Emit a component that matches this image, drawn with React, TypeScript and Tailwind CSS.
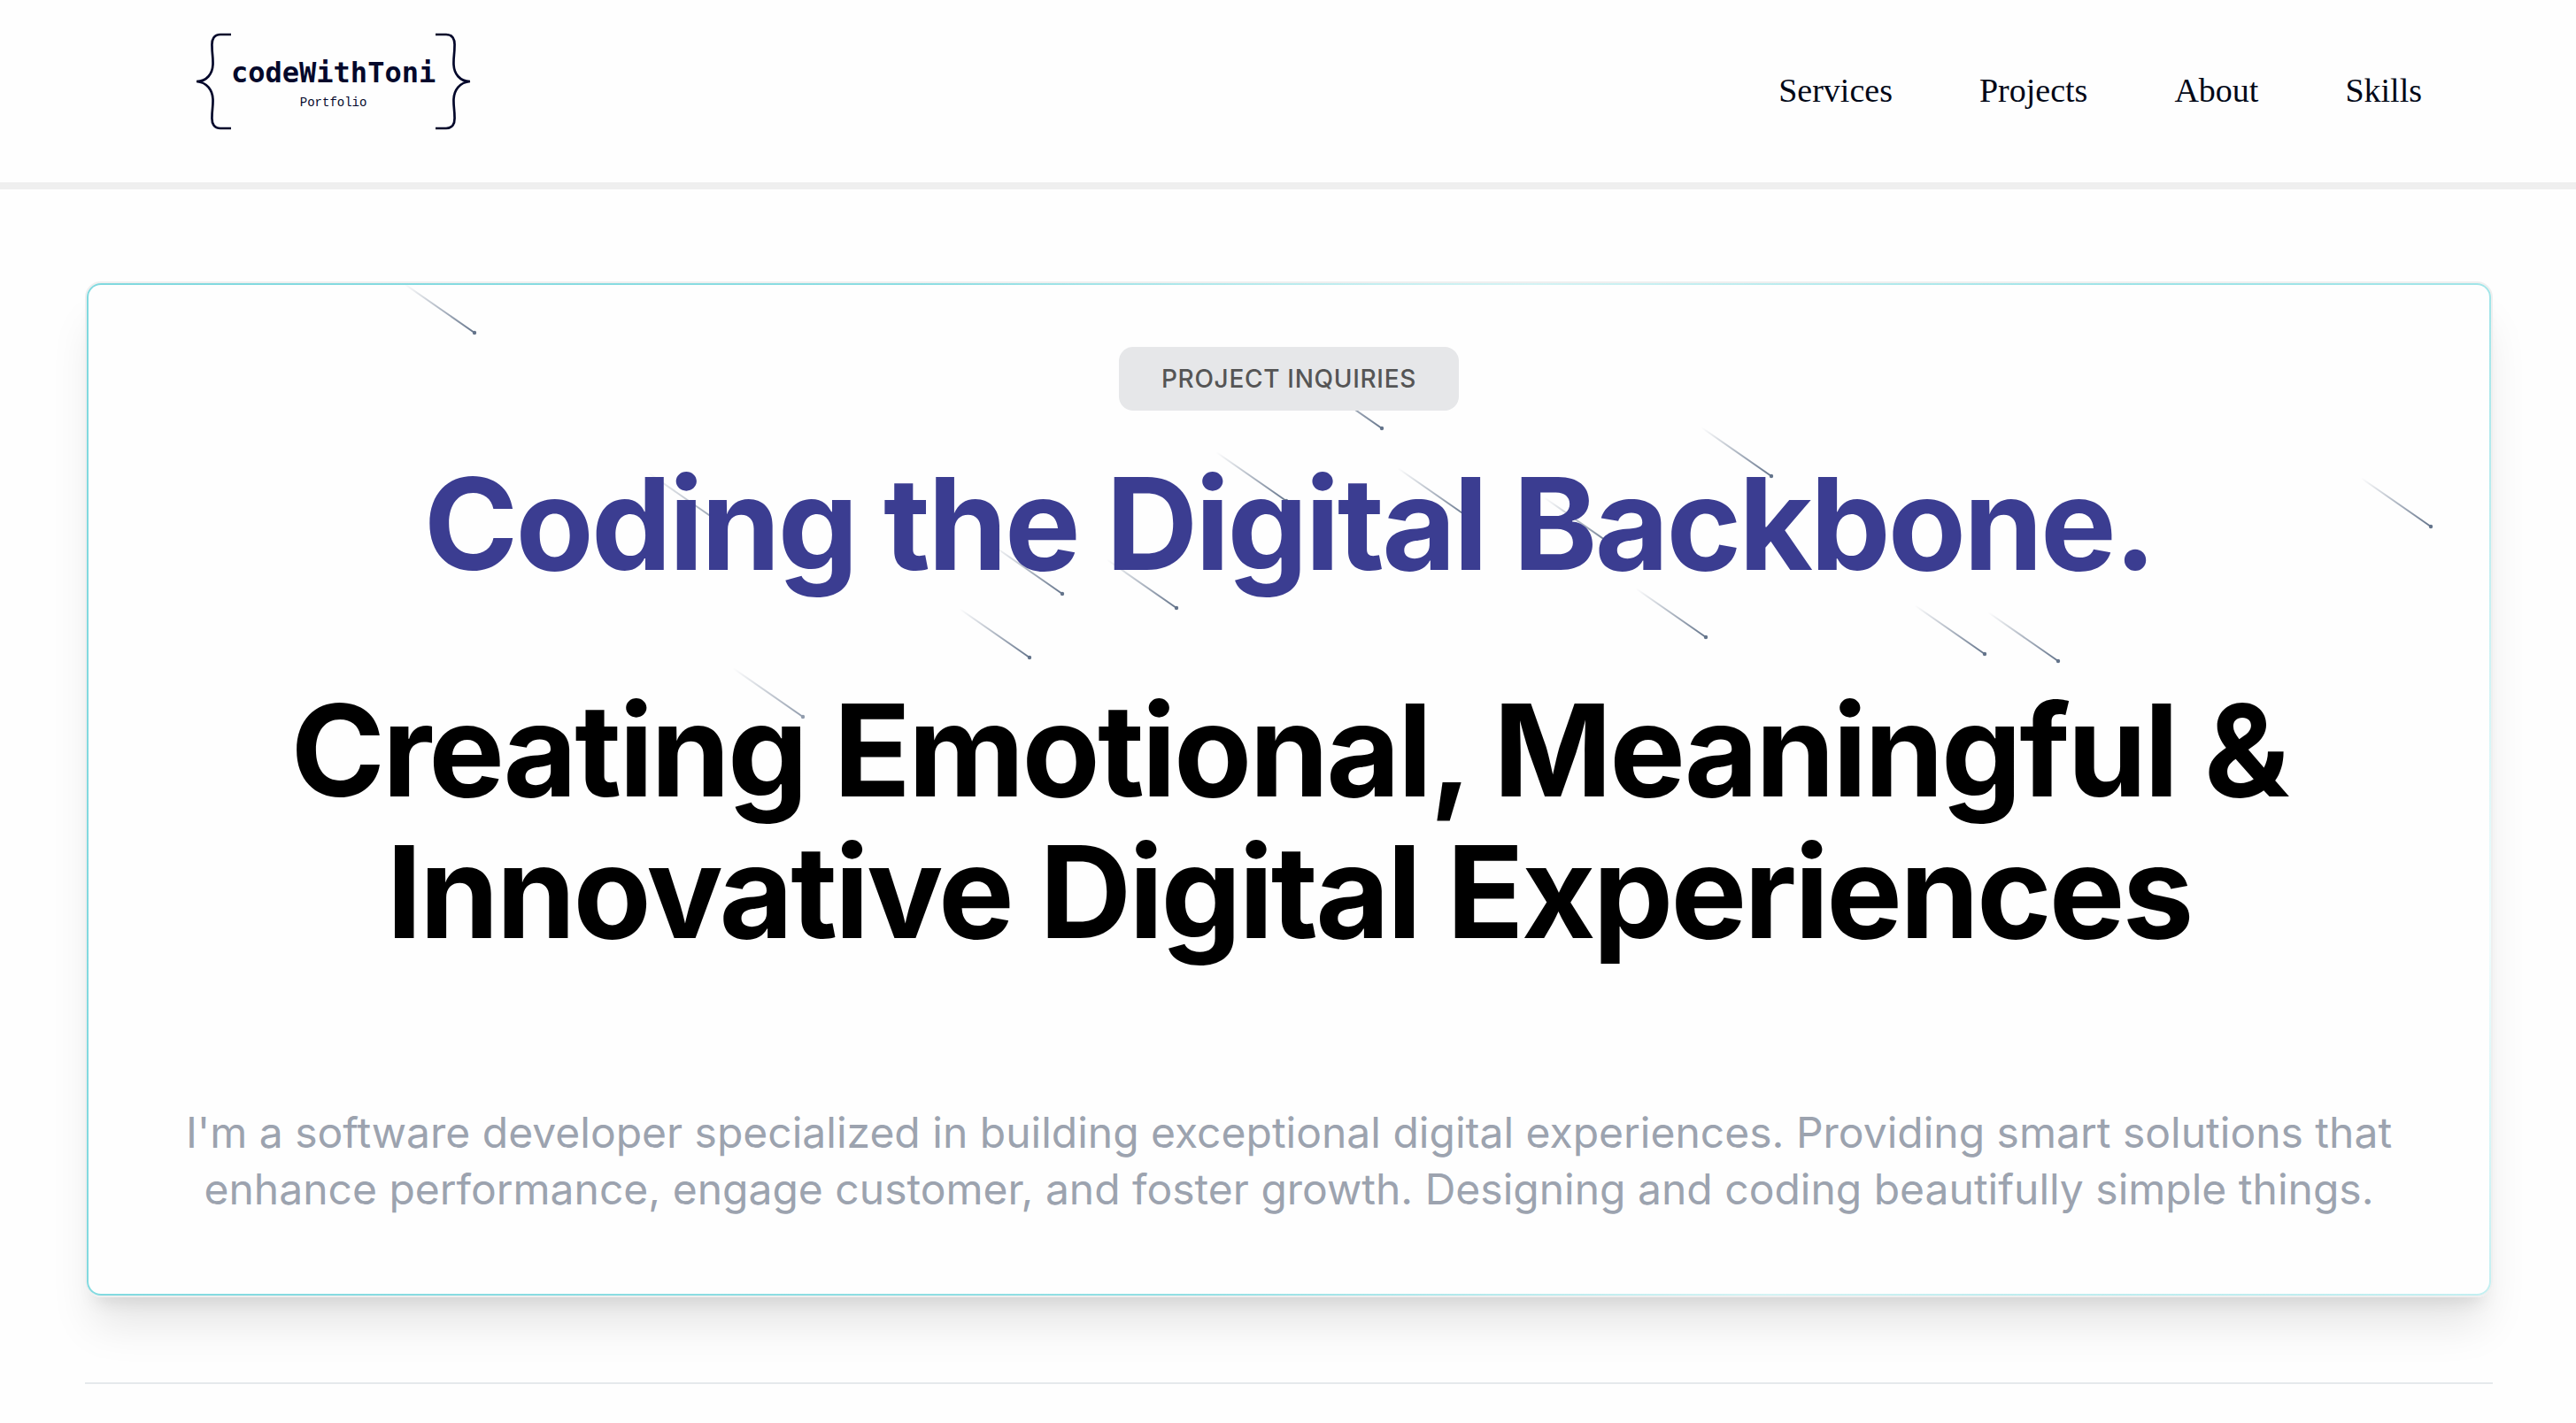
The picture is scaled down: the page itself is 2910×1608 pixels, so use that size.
const NAV_LINKS = ["Services", "Projects", "About", "Skills"];

type Meteor = { x: number; y: number; faint?: boolean };

const METEORS: Meteor[] = [
  { x: 436, y: 54 },
  { x: 1461, y: 162 },
  { x: 1353, y: 244 },
  { x: 1558, y: 262 },
  { x: 711, y: 267, faint: true },
  { x: 1100, y: 349 },
  { x: 1063, y: 421 },
  { x: 807, y: 488, faint: true },
  { x: 1229, y: 365 },
  { x: 1723, y: 295 },
  { x: 1827, y: 398 },
  { x: 1901, y: 216 },
  { x: 2142, y: 417 },
  { x: 2225, y: 425 },
  { x: 2646, y: 273 },
];

function Logo() {
  return (
    <a href="#home" aria-label="codeWithToni Portfolio" className="flex items-center text-[#04082b]">
      <Brace />
      <span className="flex flex-col items-center pt-3">
        <span className="font-['DejaVu_Sans_Mono',monospace] text-[32px] leading-9 font-bold">codeWithToni</span>
        <span className="font-['Liberation_Mono',monospace] text-[14px] leading-8">Portfolio</span>
      </span>
      <Brace flipped />
    </a>
  );
}

function Brace({ flipped = false }: { flipped?: boolean }) {
  return (
    <svg
      viewBox="0 0 40 110"
      className={flipped ? "h-[110px] w-10 -scale-x-100" : "h-[110px] w-10"}
      fill="none"
      stroke="currentColor"
      strokeWidth="2.7"
      aria-hidden="true"
    >
      <path d="M40 2H28C21 2 18 7 18.500 15C18.500 25 19.800 26 19.500 36C19 46 13 55 1 55C13 56 19 65 19.500 75C19.800 84 18.500 86 18.500 95C18 103 21 108 28 108H40" />
    </svg>
  );
}

function MeteorShower() {
  return (
    <svg
      viewBox="0 0 2712 1140"
      preserveAspectRatio="xMidYMin slice"
      className="pointer-events-none absolute inset-0 h-full w-full"
      aria-hidden="true"
    >
      <defs>
        <linearGradient id="trail" gradientUnits="userSpaceOnUse" x1="0" y1="0" x2="-79" y2="-55">
          <stop offset="0" stopColor="#64748b" />
          <stop offset="1" stopColor="#64748b" stopOpacity="0" />
        </linearGradient>
      </defs>
      {METEORS.map((m) => (
        <g key={`${m.x}-${m.y}`} transform={`translate(${m.x} ${m.y})`} opacity={m.faint ? 0.7 : 1}>
          <line x1="0" y1="0" x2="-79" y2="-55" stroke="url(#trail)" strokeWidth="2" />
          <circle r="2.200" fill="#64748b" />
        </g>
      ))}
    </svg>
  );
}

export default function App() {
  return (
    <div className="min-h-screen bg-[#fefefe] font-['Inter',sans-serif]">
      <header className="flex h-[214px] items-start justify-between border-b-8 border-[#efefef] pr-[174px] pl-[221px]">
        <div className="pt-[37px]">
          <Logo />
        </div>
        <nav aria-label="Main" className="flex gap-[98px] pt-20 font-['Liberation_Serif',serif] text-[38px] leading-[44px] text-[#020817]">
          {NAV_LINKS.map((name) => (
            <a key={name} href={`#${name.toLowerCase()}`}>
              {name}
            </a>
          ))}
        </nav>
      </header>

      <main className="pt-[104px] pr-[94px] pl-24">
        <section className="rounded-[18px] border-2 border-[#efefef] shadow-[0_40px_50px_-10px_rgba(0,0,0,0.1),0_16px_20px_-12px_rgba(0,0,0,0.1)]">
          <div className="rounded-2xl bg-[radial-gradient(circle_at_100%_64%,#effcfc,transparent_25%),radial-gradient(circle_at_60%_0%,#d4f3f4,transparent_35%),radial-gradient(circle_at_70%_100%,#d4f3f4,transparent_30%),linear-gradient(100deg,#80d9df,#a4e6e9)] p-0.5">
            <div className="relative flex flex-col items-center overflow-hidden rounded-[14px] bg-[#fefefe] px-24 pt-[70px] pb-[86px] text-center">
              <MeteorShower />
              <button
                type="button"
                className="relative h-[72px] rounded-2xl bg-[#e6e7e9] px-12 text-[28px] leading-10 font-medium tracking-wide text-[#555555]"
              >
                PROJECT INQUIRIES
              </button>
              <h1 className="relative mt-12 text-[144px] leading-[160px] font-bold tracking-[-0.02em] text-[#3b3d91]">
                Coding the Digital Backbone.
              </h1>
              <h2 className="relative mt-24 text-[144px] leading-[160px] font-bold tracking-[-0.02em] text-black">
                Creating Emotional, Meaningful &amp;
                <br />
                Innovative Digital Experiences
              </h2>
              <p className="relative mt-40 text-[48px] leading-[64px] text-[#9ca3af]">
                I'm a software developer specialized in building exceptional digital experiences. Providing smart solutions
                that enhance performance, engage customer, and foster growth. Designing and coding beautifully simple things.
              </p>
            </div>
          </div>
        </section>
        <hr className="mt-24 border-t-2 border-[#e5e9ec]" />
      </main>
    </div>
  );
}
